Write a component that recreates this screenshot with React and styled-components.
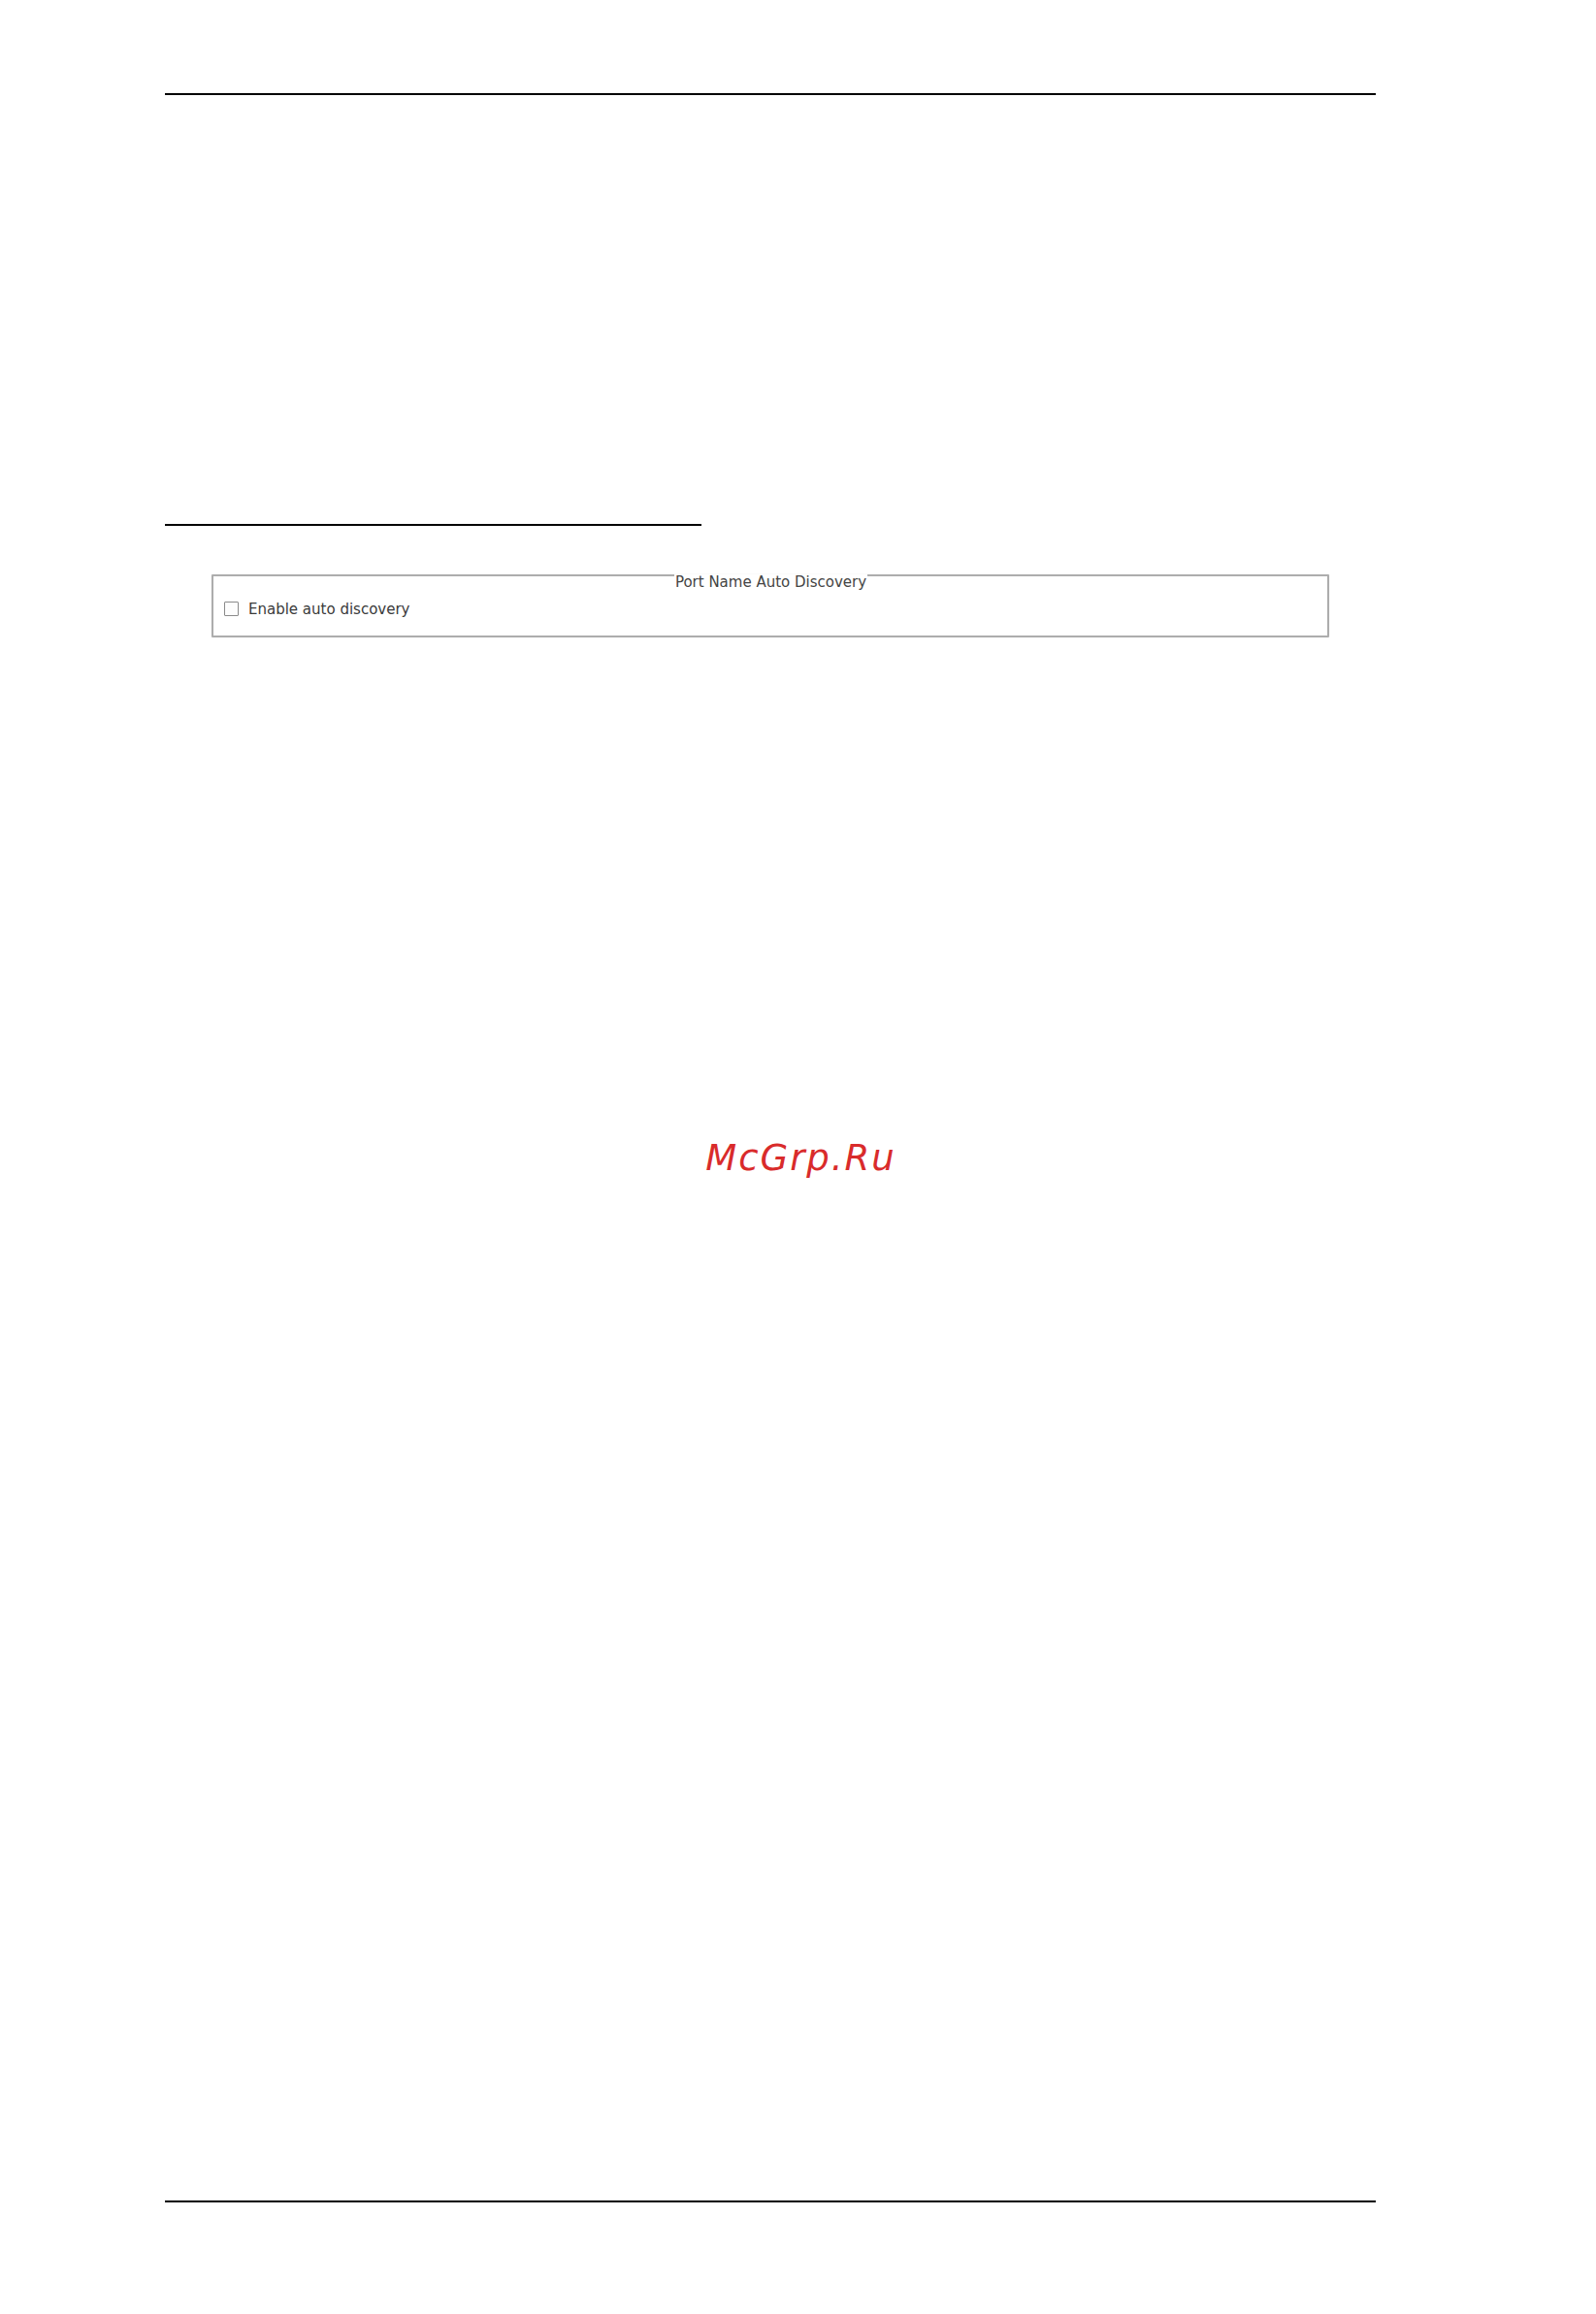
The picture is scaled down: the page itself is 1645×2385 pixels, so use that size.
import React from "react";
import styled, { createGlobalStyle } from "styled-components";

const GlobalStyle = createGlobalStyle`
  html, body {
    margin: 0;
    padding: 0;
    background: #ffffff;
  }
  * {
    box-sizing: border-box;
  }
`;

const Page = styled.div`
  width: 1645px;
  height: 2385px;
  display: flex;
  flex-direction: column;
  overflow: hidden;
  background: #ffffff;
  font-family: "DejaVu Sans", Verdana, sans-serif;
`;

const Rule = styled.div`
  height: 2px;
  background: #000000;
  margin-left: 170px;
  width: ${(p) => p.$width}px;
  margin-top: ${(p) => p.$top}px;
`;

const FooterRule = styled(Rule)`
  margin-top: auto;
  margin-bottom: 115px;
`;

const Group = styled.fieldset`
  margin: 36px 0 0 218px;
  width: 1152px;
  padding: 11px 8px 19px 9px;
  border: 2px solid #adadad;
  border-radius: 1px;
  box-shadow: 0 0 1px rgba(0, 0, 0, 0.2);
`;

const GroupTitle = styled.legend`
  margin: 0 auto;
  padding: 15px 1px 0;
  font-size: 15px;
  line-height: 15px;
  color: #444444;
`;

const OptionRow = styled.label`
  display: flex;
  align-items: center;
  gap: 10px;
  height: 17px;
  font-size: 15px;
  color: #3a3a3a;
`;

const CheckBox = styled.span`
  width: 15px;
  height: 15px;
  margin-left: 2px;
  border: 1px solid #8a8a8a;
  border-radius: 1px;
  background: #fdfdfd;
`;

const Watermark = styled.div`
  margin-top: 515px;
  padding-left: 6px;
  text-align: center;
  font-family: "DejaVu Sans", sans-serif;
  font-style: italic;
  font-size: 37px;
  line-height: 44px;
  letter-spacing: 2px;
  color: #d92b2b;
`;

export default function App() {
  return (
    <>
      <GlobalStyle />
      <Page>
        <Rule $width={1248} $top={96} />
        <Rule $width={553} $top={442} />
        <Group>
          <GroupTitle>Port Name Auto Discovery</GroupTitle>
          <OptionRow>
            <CheckBox />
            Enable auto discovery
          </OptionRow>
        </Group>
        <Watermark>McGrp.Ru</Watermark>
        <FooterRule $width={1248} />
      </Page>
    </>
  );
}
